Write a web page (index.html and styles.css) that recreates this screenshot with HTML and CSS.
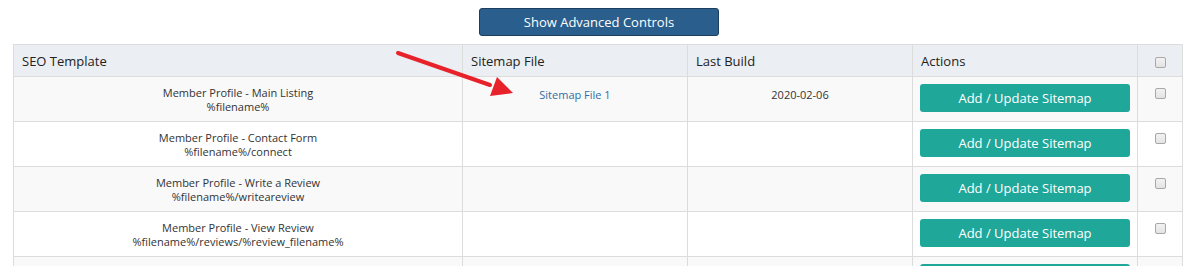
FILE: index.html
```html
<!DOCTYPE html>
<html>
<head>
<meta charset="utf-8">
<link rel="stylesheet" href="styles.css">
</head>
<body>
<div class="page">
  <div class="toolbar">
    <button class="btn-adv" type="button">Show Advanced Controls</button>
  </div>
  <div class="table-wrap">
    <table class="grid">
      <colgroup>
        <col class="c-tpl">
        <col class="c-mid">
        <col class="c-mid">
        <col class="c-mid">
        <col class="c-chk">
      </colgroup>
      <thead>
        <tr>
          <th>SEO Template</th>
          <th>Sitemap File</th>
          <th>Last Build</th>
          <th>Actions</th>
          <th class="chk"><span class="cb"></span></th>
        </tr>
      </thead>
      <tbody>
        <tr>
          <td class="tpl">Member Profile - Main Listing<br>%filename%</td>
          <td class="ctr"><a href="#" class="link">Sitemap File 1</a></td>
          <td class="ctr">2020-02-06</td>
          <td class="act"><button class="btn-add" type="button">Add / Update Sitemap</button></td>
          <td class="chk"><span class="cb"></span></td>
        </tr>
        <tr>
          <td class="tpl">Member Profile - Contact Form<br>%filename%/connect</td>
          <td></td>
          <td></td>
          <td class="act"><button class="btn-add" type="button">Add / Update Sitemap</button></td>
          <td class="chk"><span class="cb"></span></td>
        </tr>
        <tr>
          <td class="tpl">Member Profile - Write a Review<br>%filename%/writeareview</td>
          <td></td>
          <td></td>
          <td class="act"><button class="btn-add" type="button">Add / Update Sitemap</button></td>
          <td class="chk"><span class="cb"></span></td>
        </tr>
        <tr>
          <td class="tpl">Member Profile - View Review<br>%filename%/reviews/%review_filename%</td>
          <td></td>
          <td></td>
          <td class="act"><button class="btn-add" type="button">Add / Update Sitemap</button></td>
          <td class="chk"><span class="cb"></span></td>
        </tr>
        <tr>
          <td class="tpl"></td>
          <td></td>
          <td></td>
          <td class="act"><button class="btn-add" type="button" aria-label="Add / Update Sitemap"></button></td>
          <td class="chk"></td>
        </tr>
      </tbody>
    </table>
  </div>
  <svg class="arrow" width="140" height="70" viewBox="0 0 140 70">
    <line x1="8" y1="13" x2="100" y2="45" stroke="#e8222b" stroke-width="4" stroke-linecap="round"/>
    <polygon points="107,37 100,56 123,53" fill="#e8222b"/>
  </svg>
</div>
</body>
</html>
```
FILE: styles.css
```css
html, body {
  margin: 0;
  padding: 0;
  background: #fff;
  overflow: hidden;
}
body {
  font-family: "Open Sans", "Liberation Sans", sans-serif;
  color: #333;
}
.page {
  position: relative;
  width: 1197px;
  height: 266px;
  overflow: hidden;
}
.toolbar {
  display: flex;
  justify-content: center;
  align-items: flex-start;
  padding-top: 8px;
  height: 44px;
  box-sizing: border-box;
}
.btn-adv {
  width: 240px;
  height: 28px;
  background: #2a5e8c;
  border: 1px solid #1d3f5f;
  border-radius: 3px;
  color: #fff;
  font-family: "Open Sans", sans-serif;
  font-size: 13px;
  padding: 0;
  margin-left: 1px;
}
.table-wrap {
  margin: 0 15px 0 13px;
}
.grid {
  width: 1170px;
  border-collapse: collapse;
  table-layout: fixed;
  border: 1px solid #dcdcdc;
}
.c-tpl { width: 449px; }
.c-mid { width: 225px; }
.c-chk { width: 45px; }
.grid thead tr { height: 32px; }
.grid tbody tr { height: 45px; }
.grid th {
  background: #ebeef2;
  color: #222;
  font-weight: 400;
  font-size: 13px;
  text-align: left;
  padding: 0 8px;
  border: 1px solid #dcdcdc;
  vertical-align: middle;
  line-height: 18px;
}
.grid td {
  border: 1px solid #dcdcdc;
  font-size: 11px;
  line-height: 14px;
  padding: 9px 8px 0;
  vertical-align: top;
  color: #333;
}
.grid tbody tr:nth-child(odd) td { background: #f9f9f9; }
.grid tbody tr:nth-child(even) td { background: #fff; }
.tpl { text-align: center; }
.grid td.ctr { text-align: center; padding-top: 11px; }
.link {
  color: #2f6ea5;
  text-decoration: none;
}
.grid td.act { padding: 7px 7px 0 7px; }
.btn-add {
  display: block;
  width: 210px;
  height: 28px;
  background: #1fa79a;
  border: none;
  border-radius: 3px;
  color: #fff;
  font-family: "Open Sans", sans-serif;
  font-size: 13px;
  padding: 0;
}
.grid th.chk, .grid td.chk {
  text-align: center;
  padding: 0;
}
.grid th.chk { vertical-align: top; padding-top: 12px; }
.grid td.chk { vertical-align: top; padding-top: 11px; }
.cb {
  display: inline-block;
  width: 9px;
  height: 9px;
  border: 1px solid #a8a8a8;
  border-radius: 2px;
  background: linear-gradient(#f2f2f2, #e4e4e4);
  margin-left: 1px;
  vertical-align: top;
}
.arrow {
  position: absolute;
  left: 390px;
  top: 40px;
  pointer-events: none;
}
```
